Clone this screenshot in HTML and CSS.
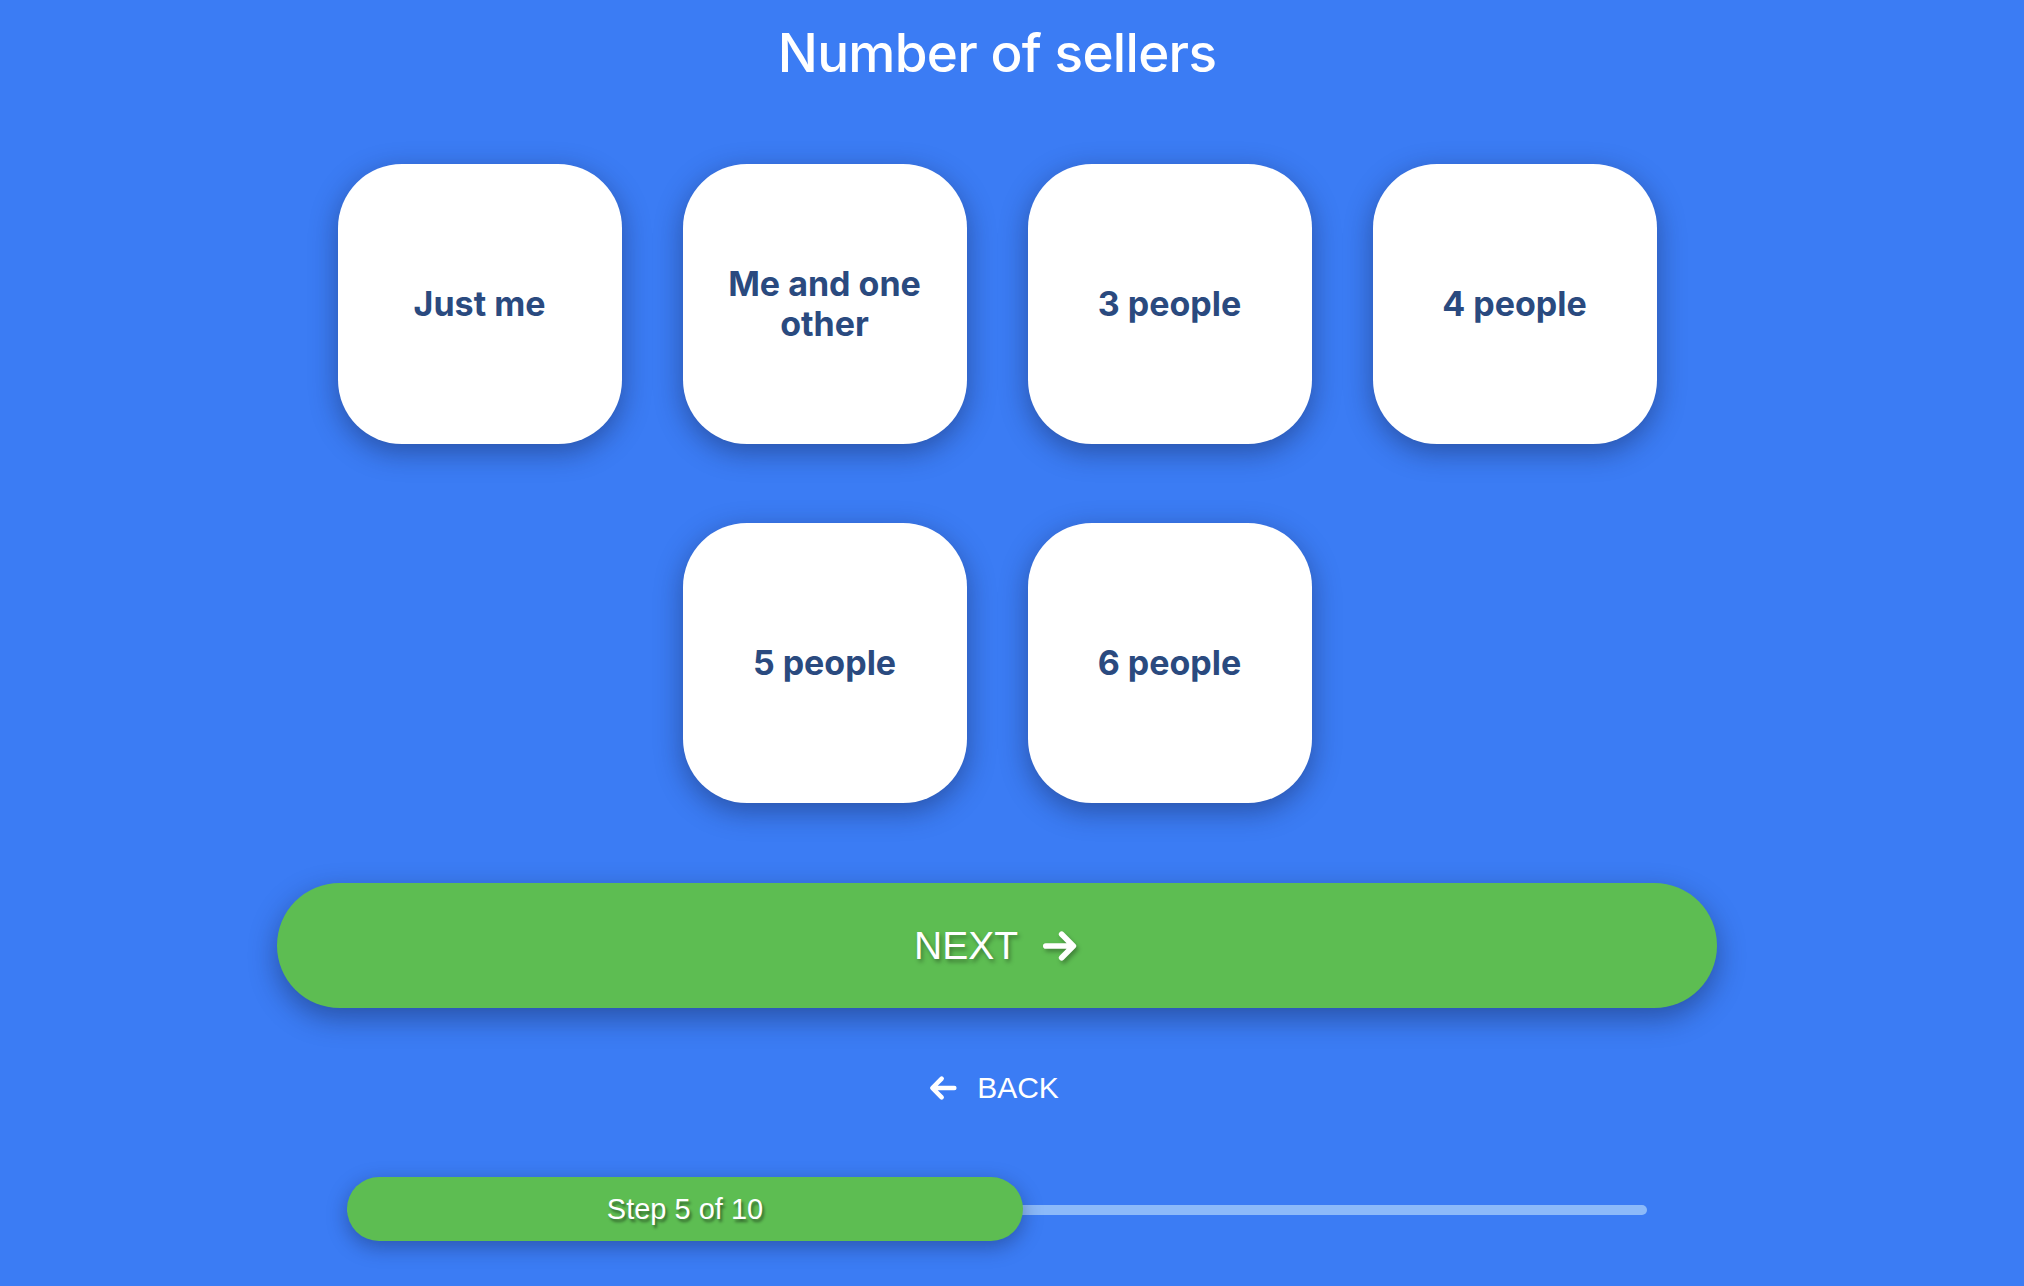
FILE: index.html
```html
<!DOCTYPE html>
<html lang="en">
<head>
<meta charset="utf-8">
<title>Number of sellers</title>
<link rel="stylesheet" href="styles.css">
</head>
<body>
<div class="page">
  <h1 class="title">Number of sellers</h1>
  <div class="options">
    <button class="card">Just me</button>
    <button class="card">Me and one<br>other</button>
    <button class="card">3 people</button>
    <button class="card">4 people</button>
    <button class="card">5 people</button>
    <button class="card">6 people</button>
  </div>
  <button class="next">
    <span class="next-label">NEXT</span>
    <svg class="next-icon" viewBox="0 0 24 24" fill="none" stroke="#fff" stroke-width="3.4" stroke-linecap="round" stroke-linejoin="round"><path d="M3.5 12h16M13 5l7 7-7 7"/></svg>
  </button>
  <div class="back">
    <svg class="back-icon" viewBox="0 0 24 24" fill="none" stroke="#fff" stroke-width="3.4" stroke-linecap="round" stroke-linejoin="round"><path d="M20.5 12h-16M11 5l-7 7 7 7"/></svg>
    <span>BACK</span>
  </div>
  <div class="progress">
    <div class="track"></div>
    <div class="fill" style="width:676px">Step 5 of 10</div>
  </div>
</div>
</body>
</html>
```
FILE: styles.css
```css
html, body {
  margin: 0;
  padding: 0;
  background: #3b7cf4;
}
body {
  font-family: "Liberation Sans", Arial, sans-serif;
  color: #fff;
}
.page {
  width: 1994px;
  display: flex;
  flex-direction: column;
  align-items: center;
  padding-top: 21px;
  padding-bottom: 40px;
}
.title {
  margin: 0;
  font-family: Inter, "Liberation Sans", sans-serif;
  font-size: 53px;
  line-height: 64px;
  font-weight: 500;
  letter-spacing: -0.7px;
  color: #fff;
}
.options {
  margin-top: 79px;
  width: 1320px;
  display: flex;
  flex-wrap: wrap;
  justify-content: center;
  column-gap: 61px;
  row-gap: 79px;
}
.card {
  width: 284px;
  height: 280px;
  border: none;
  border-radius: 64px;
  background: #fff;
  box-shadow: 0 8px 28px rgba(20, 30, 70, 0.45);
  font-family: Inter, "Liberation Sans", sans-serif;
  font-weight: 700;
  font-size: 34px;
  line-height: 40px;
  color: #2a4a7f;
  padding: 0 20px;
  display: flex;
  align-items: center;
  justify-content: center;
  text-align: center;
}
.next {
  margin-top: 80px;
  width: 1440px;
  height: 125px;
  border: none;
  border-radius: 63px;
  background: #5dbd52;
  box-shadow: 0 10px 28px rgba(20, 30, 70, 0.45);
  display: flex;
  align-items: center;
  justify-content: center;
  gap: 22px;
  color: #fff;
  font-family: "Liberation Sans", Arial, sans-serif;
  font-size: 39px;
  padding: 0;
}
.next-label {
  text-shadow: 2px 3px 4px rgba(0, 0, 0, 0.35);
}
.next-icon {
  width: 40px;
  height: 40px;
  filter: drop-shadow(2px 3px 2px rgba(0, 0, 0, 0.3));
}
.back {
  margin-top: 60px;
  height: 40px;
  display: flex;
  align-items: center;
  gap: 18px;
  font-size: 30px;
  color: #fff;
  padding-right: 8px;
}
.back-icon {
  width: 32px;
  height: 32px;
}
.progress {
  margin-top: 69px;
  width: 1300px;
  height: 64px;
  display: flex;
  align-items: center;
  position: relative;
}
.track {
  position: absolute;
  left: 0;
  right: 0;
  top: 28px;
  height: 10px;
  border-radius: 5px;
  background: #8cbaf9;
}
.fill {
  position: relative;
  height: 64px;
  border-radius: 32px;
  background: #5dbd52;
  box-shadow: 0 6px 20px rgba(20, 30, 70, 0.4);
  display: flex;
  align-items: center;
  justify-content: center;
  font-size: 29px;
  color: #fff;
  text-shadow: 2px 3px 3px rgba(0, 0, 0, 0.45);
}
```
